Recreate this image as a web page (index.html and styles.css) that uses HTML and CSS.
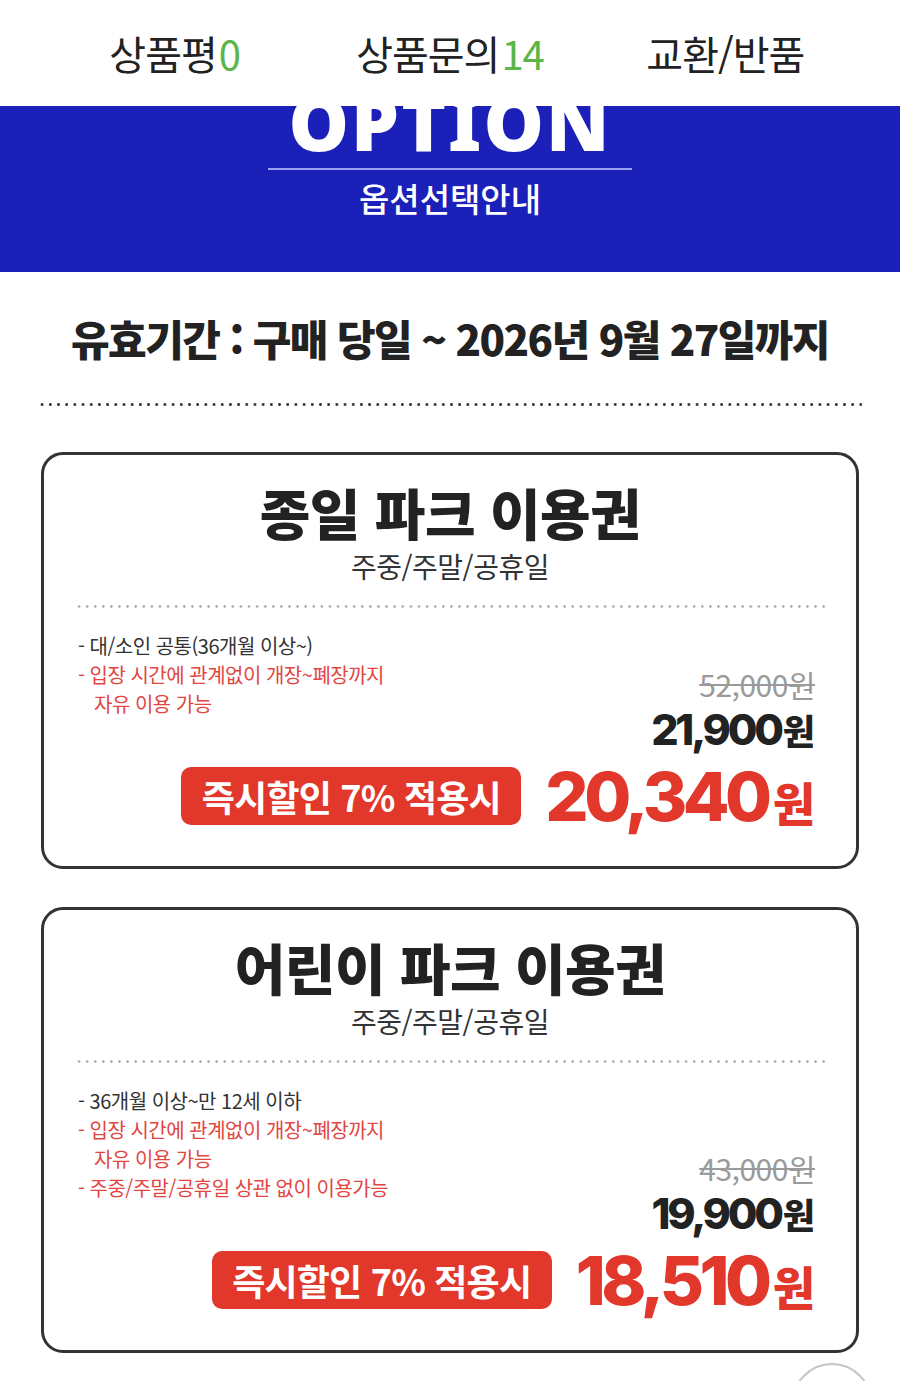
FILE: index.html
```html
<!DOCTYPE html>
<html lang="ko">
<head>
<meta charset="utf-8">
<title>옵션선택안내</title>
<link rel="stylesheet" href="styles.css">
</head>
<body>
<nav class="tabs">
  <div class="tab">상품평<span class="count">0</span></div>
  <div class="tab">상품문의<span class="count">14</span></div>
  <div class="tab">교환/반품</div>
</nav>

<header class="band">
  <div class="band-title">OPTION</div>
  <div class="band-rule"></div>
  <div class="band-sub">옵션선택안내</div>
</header>

<section class="validity">
  <h2 class="validity-text">유효기간 : 구매 당일 ~ 2026년 9월 27일까지</h2>
  <div class="dots"></div>
</section>

<main class="cards">
  <article class="card">
    <h3 class="card-title">종일 파크 이용권</h3>
    <p class="card-sub">주중/주말/공휴일</p>
    <div class="card-dots"></div>
    <div class="card-body">
      <ul class="features">
        <li>- 대/소인 공통(36개월 이상~)</li>
        <li class="red">- 입장 시간에 관계없이 개장~폐장까지<br>자유 이용 가능</li>
      </ul>
      <div class="old">52,000원</div>
      <div class="new">21,900<span class="won">원</span></div>
      <div class="deal">
        <span class="badge">즉시할인 7% 적용시</span>
        <span class="final">20,340<span class="won">원</span></span>
      </div>
    </div>
  </article>

  <article class="card">
    <h3 class="card-title">어린이 파크 이용권</h3>
    <p class="card-sub">주중/주말/공휴일</p>
    <div class="card-dots"></div>
    <div class="card-body">
      <ul class="features">
        <li>- 36개월 이상~만 12세 이하</li>
        <li class="red">- 입장 시간에 관계없이 개장~폐장까지<br>자유 이용 가능</li>
        <li class="red">- 주중/주말/공휴일 상관 없이 이용가능</li>
      </ul>
      <div class="old">43,000원</div>
      <div class="new">19,900<span class="won">원</span></div>
      <div class="deal">
        <span class="badge">즉시할인 7% 적용시</span>
        <span class="final">18,510<span class="won">원</span></span>
      </div>
    </div>
  </article>
</main>

<div class="top-btn"></div>
</body>
</html>
```

FILE: styles.css
```css
* { box-sizing: border-box; }
html, body { margin: 0; padding: 0; }
body {
  background: #fff;
  color: #222;
  font-family: "Noto Sans CJK KR", "Noto Sans", sans-serif;
  position: relative;
  overflow: hidden;
  min-height: 1381px;
}

.tabs {
  height: 106px;
  display: grid;
  grid-template-columns: repeat(3, 1fr);
  align-items: center;
  padding: 0 37px;
  background: #fff;
  position: relative;
  z-index: 2;
}
.tab {
  text-align: center;
  font-size: 40px;
  font-weight: 400;
  color: #222;
  line-height: 44px;
  letter-spacing: -1px;
}
.count { color: #5bb548; margin-left: 2px; }

.band {
  background: #1b21b8;
  height: 166px;
  overflow: hidden;
  display: flex;
  flex-direction: column;
  align-items: center;
}
.band-title {
  margin-top: -22px;
  font-family: "Noto Sans", sans-serif;
  font-weight: 900;
  font-size: 76px;
  line-height: 76px;
  color: #fff;
  letter-spacing: 2px;
}
.band-rule {
  margin-top: 8px;
  width: 364px;
  height: 2px;
  background: #9aa1f2;
}
.band-sub {
  margin-top: 10px;
  color: #fff;
  font-size: 33px;
  font-weight: 500;
  line-height: 36px;
  letter-spacing: 0;
}

.validity { padding: 0 38px; }
.validity-text {
  margin: 41px 0 0;
  text-align: center;
  font-size: 42px;
  font-weight: 900;
  line-height: 50px;
  letter-spacing: -1.6px;
  color: #222;
}
.dots {
  margin-top: 40px;
  height: 3px;
  background-image: radial-gradient(circle, #333 1.2px, transparent 1.6px);
  background-size: 8.2px 3px;
  background-repeat: repeat-x;
}

.cards {
  padding: 46px 41px 0;
  display: flex;
  flex-direction: column;
  gap: 38px;
}
.card {
  border: 3px solid #333;
  border-radius: 22px;
  padding-top: 26px;
}
.card-title {
  margin: 0;
  text-align: center;
  font-size: 55px;
  font-weight: 900;
  line-height: 60px;
  letter-spacing: -0.5px;
  color: #222;
}
.card-sub {
  margin: 9px 0 0;
  text-align: center;
  font-size: 28px;
  line-height: 32px;
  font-weight: 400;
  color: #333;
  letter-spacing: -0.5px;
}
.card-dots {
  margin: 23px 30px 0 31px;
  height: 3px;
  background-image: radial-gradient(circle, #aaa 1px, transparent 1.5px);
  background-size: 8.1px 3px;
  background-repeat: repeat-x;
}

.card-body {
  display: grid;
  grid-template-columns: 1fr auto;
  padding: 23px 41px 41px 34px;
}
.features {
  grid-column: 1;
  grid-row: 1 / span 2;
  margin: 0;
  padding: 0;
  list-style: none;
  font-size: 20px;
  line-height: 29px;
  color: #333;
  letter-spacing: -0.5px;
}
.features li { padding-left: 16px; text-indent: -16px; }
.features .red { color: #e2463f; }

.old {
  grid-column: 2;
  grid-row: 2;
  align-self: end;
  margin-bottom: 17px;
  text-align: right;
  font-size: 30px;
  line-height: 34px;
  color: #9a9a9a;
  text-decoration: line-through;
  text-decoration-thickness: 2px;
  letter-spacing: -0.5px;
}
.new {
  grid-column: 1 / -1;
  grid-row: 3;
  justify-self: end;
  font-family: "Inter", "Noto Sans CJK KR", sans-serif;
  font-size: 43px;
  font-weight: 800;
  line-height: 22px;
  color: #222;
  letter-spacing: -3.2px;
}
.won { line-height: 0; font-family: "Noto Sans CJK KR", sans-serif; font-weight: 900; }
.new .won { font-size: 35px; letter-spacing: 0; margin-left: 2px; }

.deal {
  grid-column: 1 / -1;
  grid-row: 4;
  margin-top: 27px;
  display: flex;
  justify-content: flex-end;
  align-items: center;
  gap: 24px;
}
.badge {
  height: 58px;
  width: 340px;
  border-radius: 10px;
  background: #e2382c;
  color: #fff;
  font-size: 36px;
  font-weight: 700;
  line-height: 58px;
  text-align: center;
  letter-spacing: -0.8px;
}
.final {
  color: #e2382c;
  font-family: "Inter", "Noto Sans CJK KR", sans-serif;
  font-size: 68px;
  font-weight: 800;
  line-height: 58px;
  letter-spacing: -4.5px;
}
.final .won { font-size: 46px; letter-spacing: 0; margin-left: 5px; }

.top-btn {
  position: absolute;
  left: 792px;
  top: 1363px;
  width: 80px;
  height: 80px;
  border-radius: 50%;
  border: 2px solid #c4c4c4;
  background: #fff;
}
```
